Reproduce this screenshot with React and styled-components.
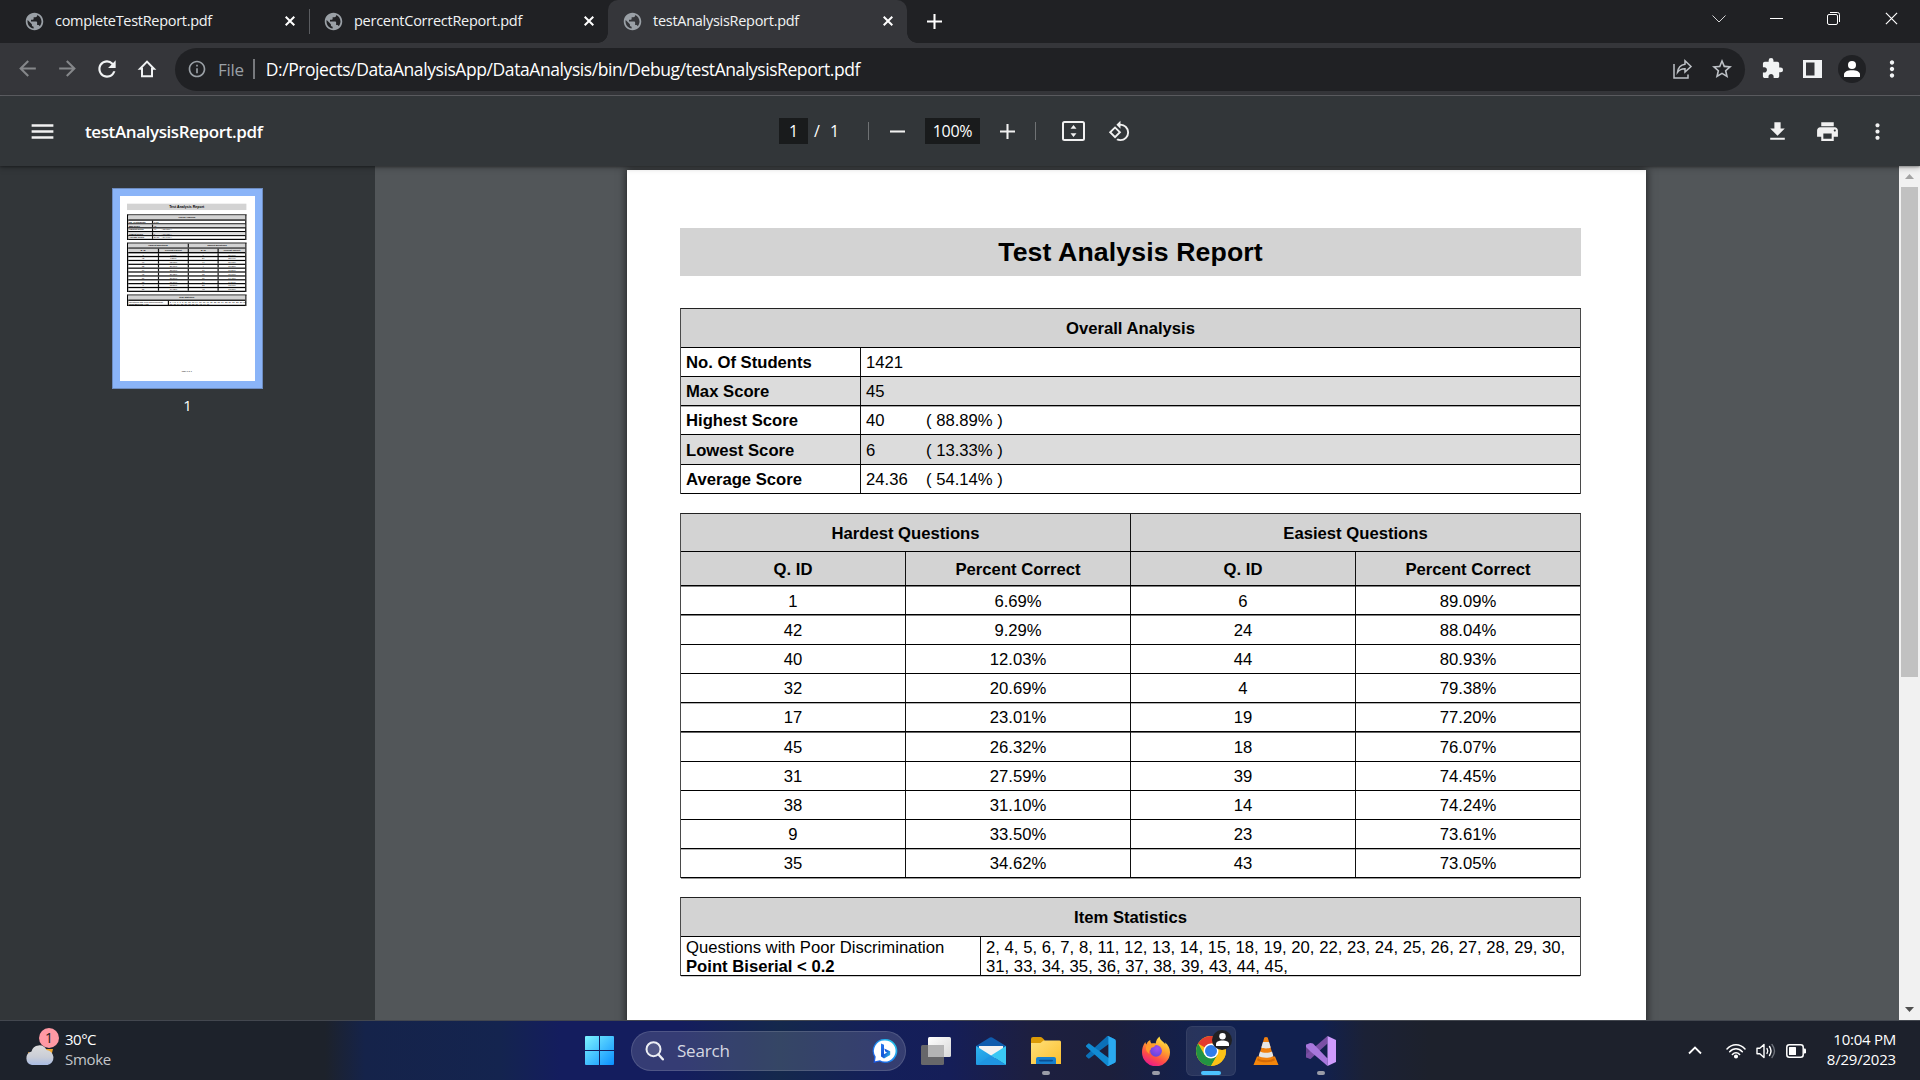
import React from "react";
import styled, { createGlobalStyle, css } from "styled-components";
import {
  MdPublic,
  MdArrowBack,
  MdArrowForward,
  MdRefresh,
  MdInfoOutline,
  MdStarOutline,
  MdExtension,
  MdMoreVert,
  MdMenu,
  MdFileDownload,
  MdPrint,
  MdRotate90DegreesCcw,
} from "react-icons/md";

const ui = `"Open Sans", "Noto Sans", "Liberation Sans", sans-serif`;

const GlobalStyle = createGlobalStyle`
  *, *::before, *::after { box-sizing: border-box; }
  html, body { margin: 0; padding: 0; background: #323639; overflow: hidden; }
  svg { display: block; flex: none; }
`;

const Screen = styled.div`
  width: 1920px;
  height: 1080px;
  display: flex;
  flex-direction: column;
  overflow: hidden;
  font-family: ${ui};
`;

const Text = styled.span`
  white-space: nowrap;
  font-size: ${(p) => p.$size || 15}px;
  line-height: ${(p) => p.$line || 20}px;
  letter-spacing: ${(p) => p.$track || 0}px;
  font-weight: ${(p) => p.$weight || 400};
  color: ${(p) => p.$color || "#fff"};
`;

/* ---------- tab strip ---------- */

const TabStrip = styled.header`
  height: 43px;
  flex: none;
  display: flex;
  background: #202124;
  padding-left: 10px;
`;

const Tab = styled.div`
  position: relative;
  width: 299px;
  height: 43px;
  display: flex;
  align-items: center;
  padding: 0 11px 1px 14px;
  border-radius: 10px 10px 0 0;
  background: ${(p) => (p.$active ? "#35363a" : "transparent")};
  color: #9aa0a6;
  ${(p) =>
    p.$active &&
    css`
      &::before,
      &::after {
        content: "";
        position: absolute;
        bottom: 0;
        width: 10px;
        height: 10px;
      }
      &::before {
        left: -10px;
        background: radial-gradient(circle at 0 0, transparent 9.5px, #35363a 10px);
      }
      &::after {
        right: -10px;
        background: radial-gradient(circle at 100% 0, transparent 9.5px, #35363a 10px);
      }
    `}
`;

const TabTitle = styled(Text)`
  flex: 1;
  margin-left: 10px;
  padding-bottom: 1px;
`;

const TabDivider = styled.i`
  position: absolute;
  right: -1px;
  top: 9px;
  width: 1px;
  height: 25px;
  background: #5a5c60;
`;

const NewTab = styled.div`
  width: 55px;
  display: flex;
  align-items: center;
  justify-content: center;
`;

const WindowButtons = styled.div`
  margin-left: auto;
  display: flex;
  height: 37px;
`;

const WindowButton = styled.div`
  width: 57.3px;
  display: flex;
  align-items: center;
  justify-content: center;
`;

/* ---------- address bar ---------- */

const NavBar = styled.nav`
  height: 53px;
  flex: none;
  display: flex;
  align-items: center;
  background: #35363a;
  border-bottom: 1px solid #606166;
  padding: 0 8px 0 7px;
`;

const NavButton = styled.div`
  width: 40px;
  height: 40px;
  padding-bottom: 1px;
  display: flex;
  align-items: center;
  justify-content: center;
  color: ${(p) => (p.$dim ? "#85878a" : "#f1f3f4")};
`;

const Omnibox = styled.div`
  width: 1570px;
  height: 43px;
  margin: 0 7px 0 8px;
  display: flex;
  align-items: center;
  border-radius: 22px;
  background: #202124;
  color: #9aa0a6;
  padding: 0 11px 0 12px;
`;

const Scheme = styled(Text)`
  padding: 1px 0 0 11px;
`;

const OmniDivider = styled.i`
  width: 2px;
  height: 20px;
  margin: 0 11px 0 9px;
  background: #77797d;
`;

const OmniActions = styled.div`
  margin-left: auto;
  display: flex;
  gap: 16px;
  color: #bdc1c6;
`;

const Avatar = styled.div`
  width: 28px;
  height: 28px;
  border-radius: 50%;
  display: flex;
  align-items: center;
  justify-content: center;
  background: #202124;
`;

/* ---------- pdf toolbar ---------- */

const PdfBar = styled.div`
  position: relative;
  z-index: 2;
  height: 70px;
  flex: none;
  display: grid;
  grid-template-columns: 779px 1fr auto;
  align-items: center;
  background: #323639;
  color: #f1f1f1;
  box-shadow: 0 1px 2px rgba(0, 0, 0, 0.3), 0 2px 6px rgba(0, 0, 0, 0.25);
`;

const PdfLeft = styled.div`
  display: flex;
  align-items: center;
  padding: 1px 0 0 28px;
  gap: 28px;
`;

const PdfCenter = styled.div`
  display: flex;
  align-items: center;
`;

const Field = styled.div`
  width: ${(p) => p.$w}px;
  height: 26px;
  display: flex;
  align-items: center;
  justify-content: center;
  background: #191b1c;
`;

const PageCount = styled(Text)`
  margin-left: 6px;
  width: 54px;
  word-spacing: 6px;
`;

const BarDivider = styled.i`
  width: 1px;
  height: 18px;
  background: #6f7274;
`;

const Slot = styled.div`
  width: ${(p) => p.$w}px;
  display: flex;
  justify-content: center;
`;

const PdfRight = styled.div`
  display: flex;
  gap: 25px;
  padding-right: 30px;
`;

/* ---------- viewer ---------- */

const Viewer = styled.main`
  height: 854px;
  flex: none;
  display: flex;
  background: #525659;
`;

const Sidebar = styled.aside`
  width: 375px;
  flex: none;
  background: #323639;
  display: flex;
  flex-direction: column;
  align-items: center;
  padding-top: 22px;
`;

const ThumbFrame = styled.div`
  width: 151px;
  height: 201px;
  border: 1px solid #6d8cc0;
  padding: 7px;
  background: #8ab4f8;
`;

const ThumbClip = styled.div`
  width: 135px;
  height: 185px;
  overflow: hidden;
  background: #fff;
`;

const Canvas = styled.section`
  flex: 1;
  display: flex;
  justify-content: center;
  padding: 4px 1px 0 0;
  overflow: hidden;
`;

const Page = styled.article`
  --line: 1px;
  --edge: #4a4a4a;
  flex: none;
  width: 1019px;
  height: 1396px;
  display: flex;
  flex-direction: column;
  padding: 58px 0 61px 53px;
  background: #fff;
  color: #000;
  font-family: "Liberation Sans", Arial, sans-serif;
  font-size: 16.67px;
  line-height: 19.2px;
  box-shadow: 0 0 8px 1px rgba(0, 0, 0, 0.6);
  ${(p) =>
    p.$mini &&
    css`
      --line: 9px;
      --edge: #000;
      transform: scale(0.1325);
      transform-origin: 0 0;
      box-shadow: none;
    `}
`;

const Title = styled.h1`
  width: 901px;
  height: 48px;
  margin: 0 0 32px;
  padding-top: 1px;
  display: flex;
  align-items: center;
  justify-content: center;
  background: #d3d3d3;
  font-size: 26.67px;
  font-weight: 700;
  letter-spacing: 0.12px;
`;

const Table = styled.section`
  width: 901px;
  flex: none;
  margin-bottom: ${(p) => p.$after || 0}px;
  border-top: var(--line) solid #222;
  border-left: var(--line) solid var(--edge);
  border-right: var(--line) solid var(--edge);
`;

const Row = styled.div`
  display: grid;
  grid-template-columns: ${(p) => p.$cols || "1fr"};
  height: ${(p) => p.$h}px;
  border-bottom: var(--line) solid #000;
  box-shadow: ${(p) => (p.$soft ? `0 1px 0 rgba(0,0,0,${p.$soft})` : "none")};
  position: relative;
  background: ${(p) => (p.$head ? "#d3d3d3" : "transparent")};
  font-weight: ${(p) => (p.$head ? 700 : 400)};
`;

const Cell = styled.div`
  display: flex;
  align-items: center;
  justify-content: ${(p) => (p.$left ? "flex-start" : "center")};
  padding: ${(p) => (p.$low ? 3 : 1)}px 0 0 ${(p) => (p.$left ? 5 : 0)}px;
  background: ${(p) => (p.$shade ? "#dcdcdc" : "transparent")};
  font-weight: ${(p) => (p.$bold ? 700 : "inherit")};
  white-space: nowrap;
  & + & {
    border-left: var(--line) solid #111;
  }
`;

const Score = styled.span`
  width: 60px;
`;

const Lines = styled.div`
  display: flex;
  flex-direction: column;
  letter-spacing: ${(p) => p.$track || 0}px;
`;

const Footer = styled.footer`
  width: 901px;
  margin-top: auto;
  text-align: center;
  font-size: 15px;
`;

const Scrollbar = styled.div`
  width: 21px;
  flex: none;
  display: flex;
  flex-direction: column;
  align-items: center;
  background: #f1f1f1;
`;

const ScrollArrow = styled.div`
  height: 21px;
  width: 21px;
  display: flex;
  align-items: center;
  justify-content: center;
`;

const ScrollThumb = styled.div`
  width: 17px;
  height: 490px;
  margin-bottom: auto;
  background: #c1c1c1;
`;

/* ---------- taskbar ---------- */

const Taskbar = styled.footer`
  height: 60px;
  flex: none;
  display: flex;
  align-items: center;
  border-top: 1px solid #43474f;
  background: linear-gradient(
    90deg,
    #1d222b 0,
    #1d222b 325px,
    #15234a 365px,
    #14244f 500px,
    #141d5e 560px,
    #141d5e 680px,
    #14284c 780px,
    #141f5a 880px,
    #151e58 950px,
    #1d1f40 1030px,
    #1c1f3c 1110px,
    #11204f 1210px,
    #11204f 1320px,
    #1b2136 1365px,
    #1d212c 1430px,
    #1d212c 1920px
  );
`;

const Weather = styled.div`
  width: 573px;
  height: 59px;
  display: flex;
  padding-left: 24px;
  gap: 9px;
  align-items: center;
`;

const WeatherIcon = styled.div`
  position: relative;
  width: 32px;
  height: 40px;
`;

const Badge = styled.span`
  position: absolute;
  left: 15px;
  top: -3px;
  width: 20px;
  height: 20px;
  border-radius: 50%;
  background: #ff99a4;
  display: flex;
  align-items: center;
  justify-content: center;
`;

const Stack = styled.div`
  display: flex;
  flex-direction: column;
  padding-bottom: 4px;
  align-items: ${(p) => (p.$end ? "flex-end" : "flex-start")};
`;

const Start = styled.div`
  width: 58px;
  display: flex;
  padding-left: 12px;
`;

const SearchBox = styled.div`
  width: 275px;
  height: 40px;
  display: flex;
  align-items: center;
  gap: 13px;
  padding: 0 7px 0 13px;
  border-radius: 20px;
  border: 1px solid rgba(255, 255, 255, 0.13);
  background: rgba(255, 255, 255, 0.14);
`;

const BingSlot = styled.div`
  margin-left: auto;
`;

const Apps = styled.div`
  display: flex;
  padding-left: 2.5px;
`;

const AppSlot = styled.div`
  width: 55px;
  height: 59px;
  display: flex;
  align-items: center;
  justify-content: center;
`;

const AppTile = styled.div`
  position: relative;
  width: 50px;
  height: 50px;
  display: flex;
  align-items: center;
  justify-content: center;
  border-radius: 6px;
  background: ${(p) => (p.$active ? "rgba(255,255,255,.09)" : "transparent")};
  box-shadow: ${(p) => (p.$active ? "inset 0 0 0 1px rgba(255,255,255,.06)" : "none")};
  &::after {
    content: "";
    display: ${(p) => (p.$running || p.$active ? "block" : "none")};
    position: absolute;
    left: 50%;
    bottom: 1px;
    width: ${(p) => (p.$active ? 20 : 8)}px;
    height: 4px;
    border-radius: 2px;
    transform: translateX(-50%);
    background: ${(p) => (p.$active ? "#4cc2ff" : "#9a9ca8")};
  }
`;

const Tray = styled.div`
  margin-left: auto;
  display: flex;
  align-items: center;
  padding-right: 24px;
`;

const TrayIcon = styled.div`
  margin-right: ${(p) => p.$gap}px;
`;

/* ---------- icons ---------- */

const Cross = ({ size = 10, stroke = 2, color = "#fff" }) => (
  <svg width={size} height={size} viewBox="0 0 10 10">
    <path d="M.7.7l8.6 8.6M9.3.7L.7 9.3" stroke={color} strokeWidth={stroke} />
  </svg>
);

const Plus = ({ size = 15, color = "#f1f1f1", minus }) => (
  <svg width={size} height={size} viewBox="0 0 16 16">
    <path d={minus ? "M0 8h16" : "M0 8h16M8 0v16"} stroke={color} strokeWidth="2.2" />
  </svg>
);

const HomeIcon = () => (
  <svg width="20" height="20" viewBox="0 0 20 20">
    <path d="M10 2.6L3 9.8h2v7.400h10V9.800h2z" fill="none" stroke="#f1f3f4" strokeWidth="2" strokeLinejoin="miter" />
  </svg>
);

const ShareIcon = () => (
  <svg width="22" height="24" viewBox="0 0 22 24" fill="none" stroke="#bdc1c6" strokeWidth="1.5">
    <path d="M2 7v14h14v-3.5" />
    <path d="M13 3.8l6 5.700-6 5.500v-3.200c-3.200-.1-5.500.9-7.500 3.600.5-4.500 3.200-7.600 7.500-8.200z" />
  </svg>
);

const SidePanelIcon = () => (
  <svg width="19" height="18" viewBox="0 0 19 18">
    <path d="M0 0h19v18H0zM3 2.500v13h8.500v-13z" fill="#f1f3f4" fillRule="evenodd" />
  </svg>
);

const PersonIcon = ({ size = 16 }) => (
  <svg width={size} height={size} viewBox="0 0 16 16" fill="#fff">
    <circle cx="8" cy="4" r="4" />
    <path d="M0 16v-2.500C0 10.800 3.500 9.300 8 9.300s8 1.500 8 4.200V16z" />
  </svg>
);

const FitIcon = () => (
  <svg width="23" height="20" viewBox="0 0 23 20">
    <rect x="1" y="1" width="21" height="18" rx="1.500" fill="none" stroke="#f1f1f1" strokeWidth="2" />
    <path d="M11.500 4l3 3.800h-6zM11.500 16l3-3.800h-6z" fill="#f1f1f1" />
  </svg>
);

const CloudIcon = () => (
  <svg width="32" height="40" viewBox="0 0 32 40">
    <defs>
      <linearGradient id="cloud" x1="0" y1="0" x2="0" y2="1">
        <stop offset="0" stopColor="#dcdcdc" />
        <stop offset=".6" stopColor="#c9cdd6" />
        <stop offset="1" stopColor="#a9bce4" />
      </linearGradient>
    </defs>
    <path d="M4 21l3 1 2 4-4-1zM21 18h8l-1 4-5 1z" fill="#f0a52a" />
    <path d="M8 34a7 7 0 01-.5-13.600A8 8 0 0122.500 19 7.600 7.600 0 0123.500 34z" fill="url(#cloud)" />
  </svg>
);

const WindowsIcon = () => (
  <svg width="29" height="29" viewBox="0 0 29 29">
    <defs>
      <linearGradient id="win" x1="0" y1="0" x2="1" y2="1">
        <stop offset="0" stopColor="#7df3ff" />
        <stop offset="1" stopColor="#0a8fff" />
      </linearGradient>
    </defs>
    <path d="M1 0h13v14H0V1q0-1 1-1zM15 0h13q1 0 1 1v13H15zM0 15h14v14H1q-1 0-1-1zM15 15h14v13q0 1-1 1H15z" fill="url(#win)" />
  </svg>
);

const SearchIcon = () => (
  <svg width="19" height="20" viewBox="0 0 19 20" fill="none" stroke="#eceef4">
    <circle cx="8.500" cy="8.200" r="7" strokeWidth="2" fill="rgba(255,255,255,.14)" />
    <path d="M13.500 13.500l4.300 4.800" strokeWidth="2.400" strokeLinecap="round" />
  </svg>
);

const BingIcon = () => (
  <svg width="26" height="26" viewBox="0 0 26 26">
    <defs>
      <linearGradient id="bingRing" x1="0" y1="1" x2="1" y2="0">
        <stop offset="0" stopColor="#1b4fe0" />
        <stop offset=".5" stopColor="#1c8cf0" />
        <stop offset="1" stopColor="#2cd5e8" />
      </linearGradient>
      <linearGradient id="bingB" x1="0" y1="0" x2="1" y2="1">
        <stop offset="0" stopColor="#2a7cf0" />
        <stop offset=".5" stopColor="#1455d8" />
        <stop offset="1" stopColor="#35d0e6" />
      </linearGradient>
    </defs>
    <path d="M13 1a12 12 0 11-5.500 22.500L1.500 25l.8-6A12 12 0 0113 1z" fill="url(#bingRing)" />
    <path d="M13 2.500a10.500 10.500 0 11-5 19.700L3 23.300l.7-4.500A10.500 10.500 0 0113 2.500z" fill="#fff" />
    <path d="M9 5.500l3 1.200v9.600l3-1.700-1.800-1-1-3 6 2.700v3.600L12 20.500l-3-1.900z" fill="url(#bingB)" />
  </svg>
);

const TaskViewIcon = () => (
  <svg width="30" height="28" viewBox="0 0 30 28">
    <defs>
      <linearGradient id="tv" x1="0" y1="0" x2="1" y2="1">
        <stop offset="0" stopColor="#fff" />
        <stop offset="1" stopColor="#d8d8d8" />
      </linearGradient>
    </defs>
    <rect x="0" y="8" width="23" height="20" rx="1.500" fill="#67676a" />
    <rect x="7" y="0" width="23" height="20" rx="1.500" fill="url(#tv)" />
    <path d="M7 8h16v12H8q-1 0-1-1z" fill="#b4b4b5" />
  </svg>
);

const MailIcon = () => (
  <svg width="30" height="28" viewBox="0 0 30 28">
    <defs>
      <linearGradient id="mail" x1="0" y1="0" x2="1" y2="1">
        <stop offset="0" stopColor="#2fb4ee" />
        <stop offset="1" stopColor="#1484dc" />
      </linearGradient>
    </defs>
    <path d="M0 9L13.800.500q1.200-.700 2.400 0L30 9v9H0z" fill="#0f5cae" />
    <path d="M3 9h24v12H3z" fill="#f2f2f2" />
    <path d="M0 9l30 19H1q-1 0-1-1z" fill="url(#mail)" />
    <path d="M30 9L15 18.500 30 28z" fill="#3ac8f4" />
    <path d="M15 18.500L30 28H1z" fill="#1f95e2" />
  </svg>
);

const FolderIcon = () => (
  <svg width="30" height="27" viewBox="0 0 30 27">
    <defs>
      <linearGradient id="fold" x1="0" y1="0" x2="1" y2="1">
        <stop offset="0" stopColor="#ffe07a" />
        <stop offset="1" stopColor="#fcbf2e" />
      </linearGradient>
    </defs>
    <path d="M0 2q0-2 2-2h7.500q1 0 1.700.8L13.500 3v4H0z" fill="#dc9a06" />
    <path d="M0 6h9.500l3-2.600h16q1.500 0 1.500 1.500V27H0z" fill="url(#fold)" />
    <path d="M5 27v-5q0-2 2-2h16q2 0 2 2v5z" fill="#1680cf" />
    <rect x="8" y="22.800" width="14" height="1.600" rx=".8" fill="#0b4f93" />
  </svg>
);

const VSCodeIcon = () => (
  <svg width="30" height="30" viewBox="0 0 100 100">
    <path d="M96 10.800L75.500.900a6.200 6.200 0 00-7.100 1.200L1.300 63.200a4.200 4.200 0 000 6.100l5.500 5a4.200 4.200 0 005.300.200L93.400 13.400C96.200 11.400 100 13.300 100 16.700v-.200c0-2.400-1.400-4.600-4-5.700z" fill="#0b70b8" />
    <path d="M96 89.200l-20.500 9.900a6.200 6.200 0 01-7.100-1.200L1.300 36.800a4.200 4.200 0 010-6.100l5.500-5a4.200 4.200 0 015.300-.200l81.300 61.200c2.800 2 6.600.1 6.600-3.300v.2c0 2.400-1.400 4.600-4 5.600z" fill="#118ad2" />
    <path d="M75.500 99.100a6.200 6.200 0 01-7.100-1.200C70.700 100.200 74.600 98.600 74.600 95.300V4.700c0-3.300-3.900-4.900-6.200-2.600A6.200 6.200 0 0175.500.900l20.600 9.900a6.200 6.200 0 013.500 5.600v67.200a6.200 6.200 0 01-3.500 5.600z" fill="#2aa9f0" />
  </svg>
);

const FirefoxIcon = () => (
  <svg width="30" height="30" viewBox="0 0 30 30">
    <defs>
      <linearGradient id="ff" x1=".8" y1="0" x2=".3" y2="1">
        <stop offset="0" stopColor="#fff14a" />
        <stop offset=".4" stopColor="#ffa02e" />
        <stop offset=".7" stopColor="#ff4f45" />
        <stop offset="1" stopColor="#e8178f" />
      </linearGradient>
      <radialGradient id="ffc" cx=".6" cy=".3" r=".8">
        <stop offset="0" stopColor="#a24df0" />
        <stop offset="1" stopColor="#5b45d8" />
      </radialGradient>
    </defs>
    <path d="M18.500.500c.3 2.500 2 4 4 5.700 1 .9 1.500 1.600 1.900 2.300-.1-1-.3-1.600-.6-2.200 3.400 2.400 5.200 6 5.200 10A14 14 0 011 16.300c0-3.800.9-7.200 3.300-10.300.2 1 .5 1.800 1 2.400C6.500 6 7.500 4.800 9.300 4c-.1 1.600.4 2.800 1.400 3.400 1.500-.3 2.800-.2 4 .1.300-3 1.600-5.300 3.800-7z" fill="url(#ff)" />
    <circle cx="15" cy="14.800" r="5.900" fill="url(#ffc)" />
    <path d="M5.500 9.500c2.500-1.600 6-2.200 9-.8-.3 1.700-1.500 2.300-3.500 2.800-1 .3-1 1.200-1.500 2.200-1.500.5-2 2-1 4-3-1.200-4.500-5-3-8.200z" fill="#ff9a2c" />
  </svg>
);

const ChromeIcon = () => (
  <svg width="30" height="30" viewBox="0 0 30 30">
    <circle cx="15" cy="15" r="15" fill="#fbc116" />
    <path d="M15 15L2.010 7.500A15 15 0 0127.990 7.500H15z" fill="#e33b2e" />
    <path d="M2.010 7.500A15 15 0 0015 30l6.495-11.250L15 15 8.505 18.750z" fill="#229342" />
    <path d="M15 7.500h12.990A15 15 0 0115 30l6.495-11.250z" fill="#fbc116" />
    <circle cx="15" cy="15" r="7.500" fill="#fff" />
    <circle cx="15" cy="15" r="6" fill="#2f7de9" />
  </svg>
);

const ChromeBadge = styled.span`
  position: absolute;
  left: 26px;
  top: 4px;
  width: 20px;
  height: 20px;
  border-radius: 50%;
  background: #202124;
  display: flex;
  align-items: center;
  justify-content: center;
`;

const VlcIcon = () => (
  <svg width="26" height="28" viewBox="0 0 26 28">
    <path d="M4 19.500h18L25.500 28H.500z" fill="#f5860b" />
    <path d="M11.300.500q1.700-1 3.400 0L20.500 20.500c-2.500 3-12.500 3-15 0z" fill="#f08010" />
    <path d="M10 5h6l1.700 5.500c-2 1.200-7.400 1.200-9.400 0zM7 14.500c3 1.800 9 1.800 12 0l1.300 4.600c-3 2.300-11.600 2.300-14.600 0z" fill="#e6e6e6" />
    <path d="M4.800 21c3.500 3 13 3 16.400 0l.8 2.200c-4 2.800-14 2.800-18 0z" fill="#d56a06" />
  </svg>
);

const VisualStudioIcon = () => (
  <svg width="30" height="30" viewBox="0 0 30 30">
    <path d="M0 8.800L4.500 7v16L0 21.200z" fill="#6b4593" />
    <path d="M4.500 23L0 21.200v-2.700L21.500 0v7.500z" fill="#7a4fa5" />
    <path d="M0 8.800L4.500 7l2.500.5L21.500 22.500V30L4.500 15.500 0 11z" fill="#a877dc" />
    <path d="M21.500 0L30 4v22l-8.500 4z" fill="#cf9bfd" />
  </svg>
);

const CaretUp = () => (
  <svg width="14" height="9" viewBox="0 0 14 9">
    <path d="M1 7.500L7 1.500l6 6" fill="none" stroke="#fff" strokeWidth="1.800" />
  </svg>
);

const WifiIcon = () => (
  <svg width="20" height="16" viewBox="0 0 20 16" fill="none" stroke="#fff" strokeWidth="1.500" strokeLinecap="round">
    <path d="M1 6C6 .200 14 .200 19 6M3.700 8.800c3.600-4 9-4 12.600 0M6.400 11.500c2-2.300 5.200-2.300 7.200 0" />
    <circle cx="10" cy="13.500" r="1.300" fill="#fff" />
  </svg>
);

const SpeakerIcon = () => (
  <svg width="20" height="18" viewBox="0 0 20 18" fill="none" stroke="#fff" strokeWidth="1.400" strokeLinejoin="round" strokeLinecap="round">
    <path d="M1 6.200h2.800L8 2.500v13l-4.200-3.700H1z" />
    <path d="M11 6.500q1.500 2.500 0 5M13.500 4.500q3 4.500 0 9" />
    <path d="M16 2.500q5 6.500 0 13" stroke="#6e727b" />
  </svg>
);

const BatteryIcon = () => (
  <svg width="20" height="14" viewBox="0 0 20 14">
    <rect x=".8" y=".8" width="16.400" height="12.400" rx="2.500" fill="none" stroke="#fff" strokeWidth="1.500" />
    <rect x="3" y="3" width="7" height="8" rx=".5" fill="#fff" />
    <path d="M18 4.500h.7q1.300 0 1.300 1.200v2.600q0 1.200-1.300 1.200H18z" fill="#fff" />
  </svg>
);

/* ---------- data ---------- */

const tabs = [
  { name: "completeTestReport.pdf", track: -0.3, divider: true },
  { name: "percentCorrectReport.pdf", track: -0.26 },
  { name: "testAnalysisReport.pdf", track: -0.28, active: true },
];

const overall = [
  { label: "No. Of Students", value: "1421", h: 29 },
  { label: "Max Score", value: "45", h: 29, soft: 0.35 },
  { label: "Highest Score", value: "40", pct: "( 88.89% )", h: 29, soft: 0.5 },
  { label: "Lowest Score", value: "6", pct: "( 13.33% )", h: 30, low: true },
  { label: "Average Score", value: "24.36", pct: "( 54.14% )", h: 29 },
];

const questions = [
  ["1", "6.69%", "6", "89.09%", 29, 0.5, true],
  ["42", "9.29%", "24", "88.04%", 30, 0, true],
  ["40", "12.03%", "44", "80.93%", 29, 0],
  ["32", "20.69%", "4", "79.38%", 29, 0.3],
  ["17", "23.01%", "19", "77.20%", 29, 0.6],
  ["45", "26.32%", "18", "76.07%", 30, 0, true],
  ["31", "27.59%", "39", "74.45%", 29, 0],
  ["38", "31.10%", "14", "74.24%", 29, 0],
  ["9", "33.50%", "23", "73.61%", 29, 0.3],
  ["35", "34.62%", "43", "73.05%", 29, 0.4],
];

const overallCols = "179px 1fr";
const questionCols = "224px 225px 225px 1fr";

function Report({ mini }) {
  return (
    <Page $mini={mini} aria-hidden={mini}>
      <Title>Test Analysis Report</Title>
      <Table $after={19}>
        <Row $head $h={39}>
          <Cell>Overall Analysis</Cell>
        </Row>
        {overall.map((r, i) => (
          <Row key={r.label} $cols={overallCols} $h={r.h} $soft={r.soft}>
            <Cell $left $bold $low={r.low} $shade={i % 2 === 1}>{r.label}</Cell>
            <Cell $left $low={r.low} $shade={i % 2 === 1}>
              <Score>{r.value}</Score>
              {r.pct}
            </Cell>
          </Row>
        ))}
      </Table>
      <Table $after={19}>
        <Row $head $h={38} $cols="449px 1fr" $soft={0.35}>
          <Cell $low>Hardest Questions</Cell>
          <Cell $low>Easiest Questions</Cell>
        </Row>
        <Row $head $h={34} $cols={questionCols} $soft={0.5}>
          <Cell $low>Q. ID</Cell>
          <Cell $low>Percent Correct</Cell>
          <Cell $low>Q. ID</Cell>
          <Cell $low>Percent Correct</Cell>
        </Row>
        {questions.map(([a, b, c, d, h, soft, low]) => (
          <Row key={a} $cols={questionCols} $h={h} $soft={soft}>
            <Cell $low={low}>{a}</Cell>
            <Cell $low={low}>{b}</Cell>
            <Cell $low={low}>{c}</Cell>
            <Cell $low={low}>{d}</Cell>
          </Row>
        ))}
      </Table>
      <Table>
        <Row $head $h={39}>
          <Cell>Item Statistics</Cell>
        </Row>
        <Row $h={39} $cols="299px 1fr" $soft={0.2}>
          <Cell $left>
            <Lines>
              <span>Questions with Poor Discrimination</span>
              <b>Point Biserial &lt; 0.2</b>
            </Lines>
          </Cell>
          <Cell $left>
            <Lines $track={0.02}>
              <span>2, 4, 5, 6, 7, 8, 11, 12, 13, 14, 15, 18, 19, 20, 22, 23, 24, 25, 26, 27, 28, 29, 30,</span>
              <span>31, 33, 34, 35, 36, 37, 38, 39, 43, 44, 45,</span>
            </Lines>
          </Cell>
        </Row>
      </Table>
      {mini && <Footer>Page 1 of 1</Footer>}
    </Page>
  );
}

const apps = [
  { id: "taskview", icon: <TaskViewIcon /> },
  { id: "mail", icon: <MailIcon /> },
  { id: "files", icon: <FolderIcon />, running: true },
  { id: "vscode", icon: <VSCodeIcon /> },
  { id: "firefox", icon: <FirefoxIcon />, running: true },
  { id: "chrome", icon: <ChromeIcon />, active: true },
  { id: "vlc", icon: <VlcIcon /> },
  { id: "vs", icon: <VisualStudioIcon />, running: true },
];

export default function App() {
  return (
    <Screen>
      <GlobalStyle />
      <TabStrip>
        {tabs.map((t) => (
          <Tab key={t.name} $active={t.active}>
            <MdPublic size={21} />
            <TabTitle $size={14.5} $track={t.track} $color="#f1f3f4">{t.name}</TabTitle>
            <Slot $w={16}><Cross /></Slot>
            {t.divider && <TabDivider />}
          </Tab>
        ))}
        <NewTab><Plus color="#fff" /></NewTab>
        <WindowButtons>
          <WindowButton>
            <svg width="14" height="8" viewBox="0 0 14 8"><path d="M.5.5L7 7 13.500.5" fill="none" stroke="#d5d5d6" /></svg>
          </WindowButton>
          <WindowButton>
            <svg width="13" height="1" viewBox="0 0 13 1"><path d="M0 .5h13" stroke="#fff" /></svg>
          </WindowButton>
          <WindowButton>
            <svg width="14" height="13" viewBox="0 0 14 13" fill="none" stroke="#fff">
              <rect x=".5" y="2.500" width="10" height="10" rx="1.500" />
              <path d="M3 .5h7.500q2 0 2 2V10" />
            </svg>
          </WindowButton>
          <WindowButton><Cross size={13} stroke={0.9} /></WindowButton>
        </WindowButtons>
      </TabStrip>

      <NavBar>
        <NavButton $dim><MdArrowBack size={25} /></NavButton>
        <NavButton $dim><MdArrowForward size={25} /></NavButton>
        <NavButton><MdRefresh size={26} /></NavButton>
        <NavButton><HomeIcon /></NavButton>
        <Omnibox>
          <MdInfoOutline size={20} />
          <Scheme $size={17} $track={-0.3} $color="#9aa0a6">File</Scheme>
          <OmniDivider />
          <Text $size={17.5} $track={-0.42}>D:/Projects/DataAnalysisApp/DataAnalysis/bin/Debug/testAnalysisReport.pdf</Text>
          <OmniActions>
            <ShareIcon />
            <MdStarOutline size={24} />
          </OmniActions>
        </Omnibox>
        <NavButton><MdExtension size={23} /></NavButton>
        <NavButton><SidePanelIcon /></NavButton>
        <NavButton><Avatar><PersonIcon /></Avatar></NavButton>
        <NavButton><MdMoreVert size={26} /></NavButton>
      </NavBar>

      <PdfBar>
        <PdfLeft>
          <MdMenu size={29} />
          <Text $size={17} $weight={600} $track={-0.4}>testAnalysisReport.pdf</Text>
        </PdfLeft>
        <PdfCenter>
          <Field $w={29}><Text $size={16}>1</Text></Field>
          <PageCount $size={16}>/ 1</PageCount>
          <BarDivider />
          <Slot $w={56}><Plus minus /></Slot>
          <Field $w={55}><Text $size={16} $track={-0.3}>100%</Text></Field>
          <Slot $w={55}><Plus /></Slot>
          <BarDivider />
          <Slot $w={75}><FitIcon /></Slot>
          <Slot $w={17}><MdRotate90DegreesCcw size={23} /></Slot>
        </PdfCenter>
        <PdfRight>
          <MdFileDownload size={25} />
          <MdPrint size={25} />
          <MdMoreVert size={25} />
        </PdfRight>
      </PdfBar>

      <Viewer>
        <Sidebar>
          <ThumbFrame>
            <ThumbClip><Report mini /></ThumbClip>
          </ThumbFrame>
          <Text $size={15} $line={33}>1</Text>
        </Sidebar>
        <Canvas><Report /></Canvas>
        <Scrollbar>
          <ScrollArrow>
            <svg width="9" height="5" viewBox="0 0 9 5"><path d="M0 5L4.500 0 9 5z" fill="#a3a3a3" /></svg>
          </ScrollArrow>
          <ScrollThumb />
          <ScrollArrow>
            <svg width="9" height="5" viewBox="0 0 9 5"><path d="M0 0l4.500 5L9 0z" fill="#505050" /></svg>
          </ScrollArrow>
        </Scrollbar>
      </Viewer>

      <Taskbar>
        <Weather>
          <WeatherIcon>
            <CloudIcon />
            <Badge><Text $size={14} $color="#1b1b1b">1</Text></Badge>
          </WeatherIcon>
          <Stack>
            <Text $track={-0.5}>30°C</Text>
            <Text $track={-0.3} $color="#c4c6ca">Smoke</Text>
          </Stack>
        </Weather>
        <Start><WindowsIcon /></Start>
        <SearchBox>
          <SearchIcon />
          <Text $size={17} $track={-0.2} $color="#d5d8e2">Search</Text>
          <BingSlot><BingIcon /></BingSlot>
        </SearchBox>
        <Apps>
          {apps.map((a) => (
            <AppSlot key={a.id}>
              <AppTile $active={a.active} $running={a.running}>
                {a.icon}
                {a.active && <ChromeBadge><PersonIcon size={13} /></ChromeBadge>}
              </AppTile>
            </AppSlot>
          ))}
        </Apps>
        <Tray>
          <TrayIcon $gap={24}><CaretUp /></TrayIcon>
          <TrayIcon $gap={10}><WifiIcon /></TrayIcon>
          <TrayIcon $gap={10}><SpeakerIcon /></TrayIcon>
          <TrayIcon $gap={21}><BatteryIcon /></TrayIcon>
          <Stack $end>
            <Text $track={-0.25}>10:04 PM</Text>
            <Text $track={-0.2}>8/29/2023</Text>
          </Stack>
        </Tray>
      </Taskbar>
    </Screen>
  );
}
